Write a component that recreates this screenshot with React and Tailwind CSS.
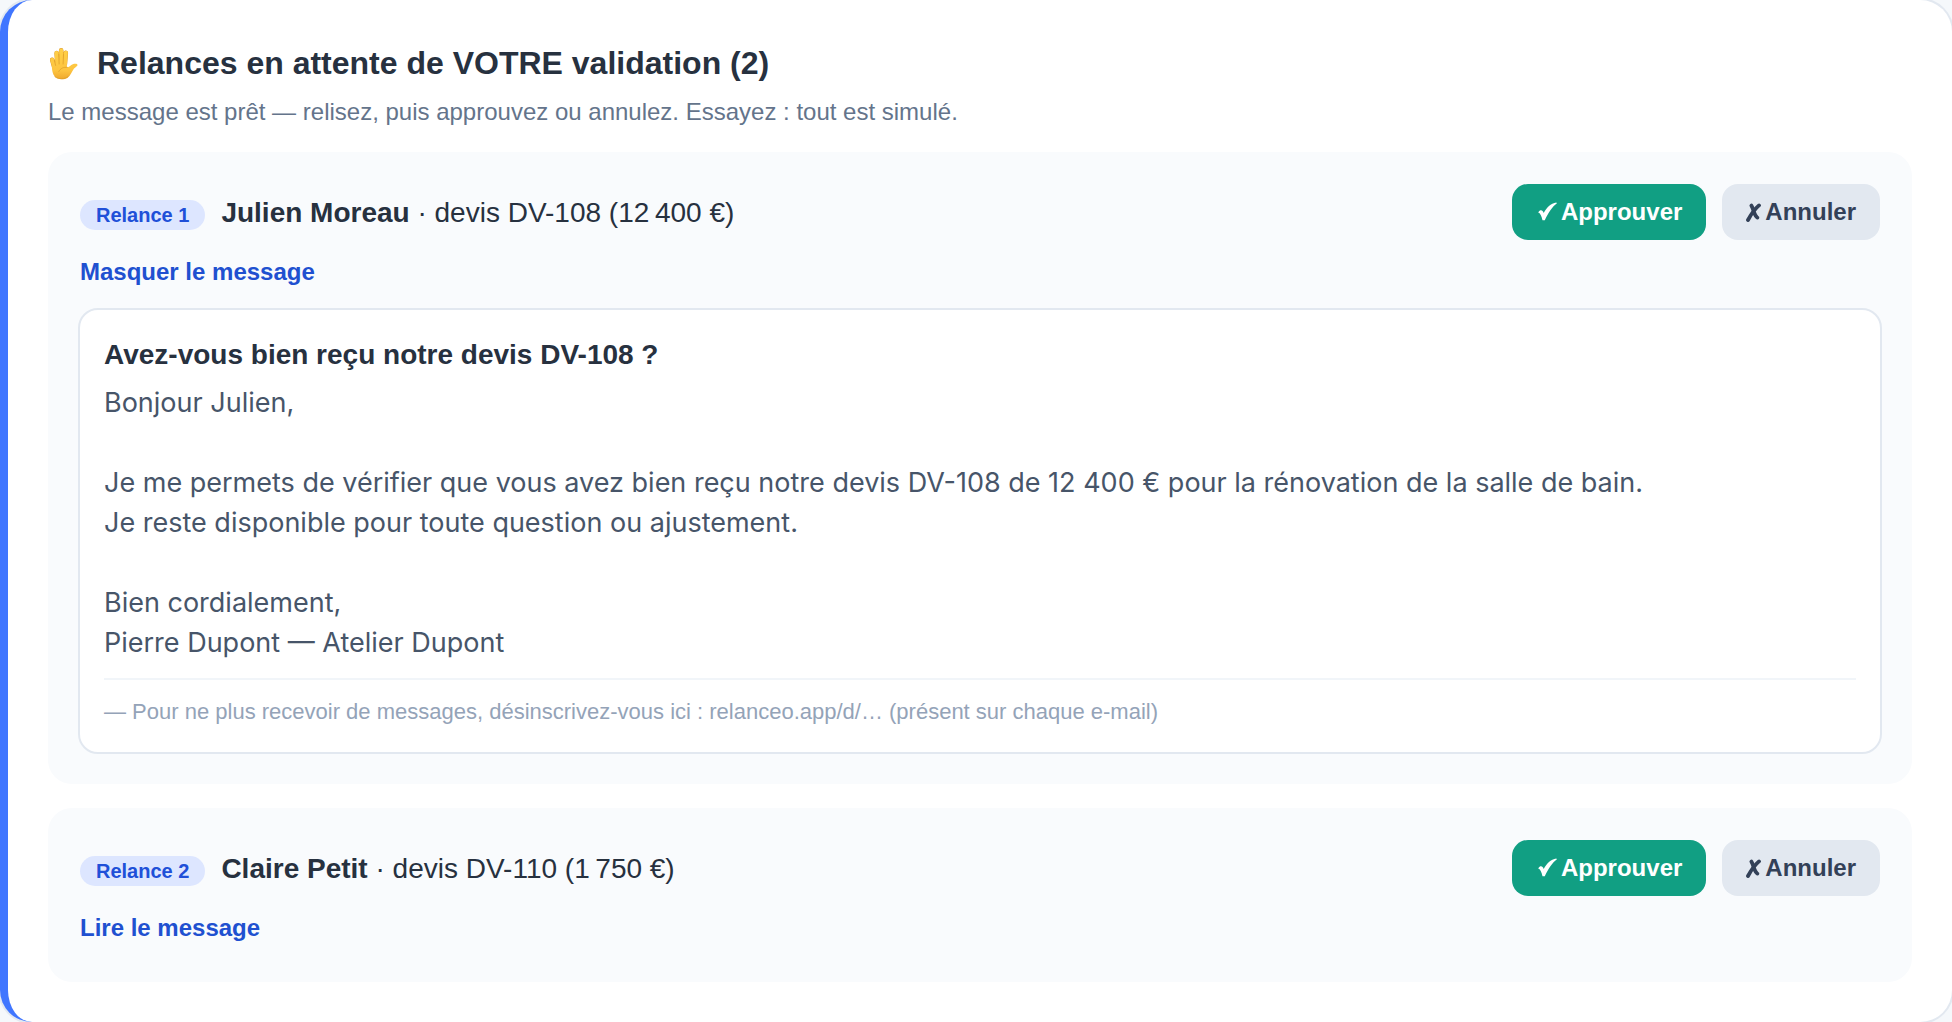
import { useState } from "react";

const relances = [
  {
    id: 1,
    label: "Relance 1",
    client: "Julien Moreau",
    devis: "devis DV-108 (12\u202f400 €)",
    subject: "Avez-vous bien reçu notre devis DV-108 ?",
    body: "Bonjour Julien,\n\nJe me permets de vérifier que vous avez bien reçu notre devis DV-108 de 12 400 € pour la rénovation de la salle de bain.\nJe reste disponible pour toute question ou ajustement.\n\nBien cordialement,\nPierre Dupont — Atelier Dupont",
  },
  {
    id: 2,
    label: "Relance 2",
    client: "Claire Petit",
    devis: "devis DV-110 (1\u202f750 €)",
    subject: "Votre devis DV-110",
    body: "Bonjour Claire,\n\nJe reste disponible pour toute question ou ajustement.\n\nBien cordialement,\nPierre Dupont — Atelier Dupont",
  },
];

function HandIcon() {
  return (
    <svg viewBox="0 0 30 33" className="h-[33px] w-[30px] shrink-0" aria-hidden="true">
      <defs>
        <linearGradient id="hand" gradientUnits="userSpaceOnUse" x1="0" y1="1" x2="0" y2="33">
          <stop offset="0" stopColor="#ffd048" />
          <stop offset="0.7" stopColor="#fdc440" />
          <stop offset="1" stopColor="#eda52c" />
        </linearGradient>
      </defs>
      <g stroke="#dd9a28" strokeWidth="4.6" strokeLinecap="round" fill="none">
        <path d="M4.2 12.8 6.4 20.5M8.6 6 9.4 17M13.2 3.4V17M17.8 5.8 16.9 17" />
      </g>
      <g stroke="url(#hand)" strokeWidth="4" strokeLinecap="round" fill="none">
        <path d="M4.2 12.8 6.4 20.5M8.6 6 9.4 17M13.2 3.4 13.21 17M17.8 5.8 16.9 17" />
      </g>
      <path
        d="M3.9 18 8 15.2 18.7 15C18.3 17.5 18.6 19.7 19.6 20.2 21.3 20.5 22.4 18.2 24.8 17.3 27 16.5 29.6 16.7 29.5 18.2 29.2 19.5 27.3 20 26 21.6 23.8 24.6 22.6 28.8 19.4 30.9 15.5 33.3 8 32.8 5.4 27.5 4.2 24.8 3.8 21.5 3.9 18Z"
        fill="url(#hand)"
      />
      <path
        d="M10.8 7.5 11.1 17M15.5 7.5 15.1 17M6.4 13.5 7.6 18.4M10.8 24.5C12.6 21.2 15.6 19.8 19.2 20.4M7 29.8C11 32.6 16.8 32.2 20 29.6"
        fill="none"
        stroke="#e0a02a"
        strokeWidth="0.8"
        strokeLinecap="round"
      />
    </svg>
  );
}

function CheckIcon() {
  return (
    <svg viewBox="-2 0 21 20" className="h-5 w-[21px]" fill="currentColor" aria-hidden="true">
      <path d="M.2 10.4C2.2 7.4 4.6 7.8 5.7 11 8.6 5.6 12.6 1.2 18.4.5L18.8 1.4C14.4 4.4 10.2 10.8 6.8 18.2H4.5C3.5 13.8 2.2 10.8.2 10.4Z" />
    </svg>
  );
}

function CrossIcon() {
  return (
    <svg viewBox="0 0 15 20" className="h-5 w-[15px]" fill="none" stroke="currentColor" strokeLinecap="round" aria-hidden="true">
      <path d="M13 3.4C9.2 6.6 5.2 12 2 18" strokeWidth="3.8" />
      <path d="M5.4 3.6C6.6 5.4 7 7.4 8 10.2 9 13 9.8 14.8 11.4 15.6" strokeWidth="3.8" />
    </svg>
  );
}

function Relance({ item, initialOpen }) {
  const [open, setOpen] = useState(initialOpen);
  return (
    <article className="flex flex-col rounded-3xl bg-[#f9fbfd] px-8 pt-8 pb-[30px]">
      <div className="flex items-center justify-between gap-4">
        <p className="flex items-baseline pt-0.5 text-[28px] leading-10 text-[#27313f]">
          <span className="mr-4 rounded-full bg-[#dde6ff] px-4 text-[20px] leading-[30px] font-bold text-[#2050d8]">{item.label}</span>
          <span>
            <strong>{item.client}</strong> · {item.devis}
          </span>
        </p>
        <div className="flex shrink-0 gap-4 text-[24px] leading-8 font-bold">
          <button className="flex h-14 items-center gap-1 rounded-2xl bg-[#119f83] px-6 text-white">
            <CheckIcon />
            Approuver
          </button>
          <button className="flex h-14 items-center gap-1 rounded-2xl bg-[#e2e8f0] px-6 text-[#334158]">
            <CrossIcon />
            Annuler
          </button>
        </div>
      </div>
      <button
        className="mt-4 mb-2 self-start text-[24px] leading-8 font-bold text-[#2050d0]"
        aria-expanded={open}
        onClick={() => setOpen(!open)}
      >
        {open ? "Masquer le message" : "Lire le message"}
      </button>
      {open && (
        <div className="-mx-0.5 mt-3 rounded-[20px] border-2 border-[#e2e8f0] bg-white px-6 pt-[25px] pb-6">
          <h3 className="text-[28px] leading-10 font-bold text-[#27313f]">{item.subject}</h3>
          <p className="mt-2 font-[Inter,sans-serif] text-[27px] leading-10 whitespace-pre-line text-[#475569]">{item.body}</p>
          <p className="mt-[15px] border-t-2 border-[#f1f5f9] pt-4 text-[22px] leading-8 text-[#94a3b8]">
            — Pour ne plus recevoir de messages, désinscrivez-vous ici : relanceo.app/d/… (présent sur chaque e-mail)
          </p>
        </div>
      )}
    </article>
  );
}

export default function App() {
  return (
    <div className="min-h-screen bg-[#f5f8fb] font-['Liberation_Sans',Arial,sans-serif]">
      <main className="min-h-screen rounded-[32px] border-l-8 border-l-[#4076ff] bg-white px-10 pt-10 pb-10 ring-2 ring-[#e2e8f0]">
        <h1 className="flex items-center gap-[19px] text-[32px] leading-[46px] font-bold text-[#27313f]">
          <HandIcon />
          Relances en attente de VOTRE validation (2)
        </h1>
        <p className="mt-2 text-[24px] leading-9 text-[#64748b]">
          Le message est prêt — relisez, puis approuvez ou annulez. Essayez : tout est simulé.
        </p>
        <section className="mt-[22px] flex flex-col gap-6">
          {relances.map((item) => (
            <Relance key={item.id} item={item} initialOpen={item.id === 1} />
          ))}
        </section>
      </main>
    </div>
  );
}
